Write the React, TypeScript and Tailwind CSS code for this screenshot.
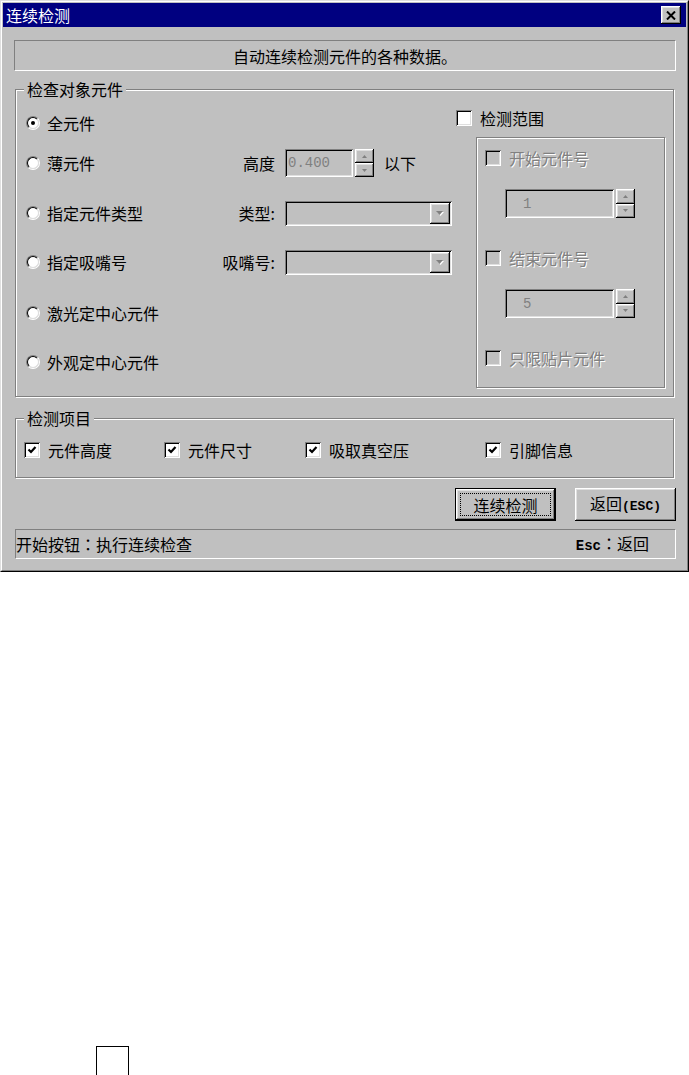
import React from "react";

// win98 style bevels
const raised =
  "[box-shadow:inset_-1px_-1px_0_#000,inset_1px_1px_0_#fff,inset_-2px_-2px_0_#808080,inset_2px_2px_0_#dfdfdf]";
const sunken =
  "[box-shadow:inset_1px_1px_0_#808080,inset_-1px_-1px_0_#fff,inset_2px_2px_0_#000,inset_-2px_-2px_0_#dfdfdf]";
const etched = "border border-[#808080] [box-shadow:1px_1px_0_#fff,inset_1px_1px_0_#fff]";
const mono = "[font-family:'Liberation_Mono',monospace]";
const tcColon = "[font-family:'Noto_Sans_CJK_TC',sans-serif]";
const grayText = "text-[#808080] [text-shadow:1px_1px_0_#fff]";

function Radio({ checked }: { checked?: boolean }) {
  return (
    <span className="flex h-[14px] w-[14px] shrink-0 rounded-full border border-t-[#808080] border-l-[#808080] border-r-white border-b-white">
      <span className="flex h-full w-full items-center justify-center rounded-full border border-t-black border-l-black border-r-[#dfdfdf] border-b-[#dfdfdf] bg-white">
        {checked && <span className="h-[4px] w-[4px] rounded-full bg-black" />}
      </span>
    </span>
  );
}

function Check({ checked, disabled }: { checked?: boolean; disabled?: boolean }) {
  return (
    <span
      className={`flex h-[16px] w-[16px] shrink-0 items-center justify-center ${sunken} ${
        disabled ? "bg-[#c0c0c0]" : "bg-white"
      }`}
    >
      {checked && (
        <svg width="10" height="10" viewBox="0 0 10 10">
          <path d="M1.5 4.5 L4 7 L8.5 2" stroke="#000" strokeWidth="2.2" fill="none" />
        </svg>
      )}
    </span>
  );
}

function SpinButtons({ h }: { h: string }) {
  return (
    <div className={`ml-[2px] flex flex-col ${h}`}>
      <div className={`flex w-[19px] flex-1 items-center justify-center bg-[#c0c0c0] ${raised}`}>
        <svg width="5" height="3" viewBox="0 0 5 3">
          <path d="M2.5 0 L5 3 L0 3Z" fill="#808080" />
        </svg>
      </div>
      <div className={`flex w-[19px] flex-1 items-center justify-center bg-[#c0c0c0] ${raised}`}>
        <svg width="5" height="3" viewBox="0 0 5 3">
          <path d="M0 0 L5 0 L2.5 3Z" fill="#808080" />
        </svg>
      </div>
    </div>
  );
}

function Combo() {
  return (
    <div className={`flex h-[25px] w-[167px] items-center justify-end bg-[#c0c0c0] pr-[2px] ${sunken}`}>
      <div className={`flex h-[21px] w-[20px] items-center justify-center bg-[#c0c0c0] ${raised}`}>
        <svg width="8" height="5" viewBox="0 0 8 5">
          <path d="M1 1 L8 1 L4.5 5Z" fill="#fff" />
          <path d="M0 0 L7 0 L3.5 4Z" fill="#808080" />
        </svg>
      </div>
    </div>
  );
}

function RadioCell({ label, checked, right }: { label: string; checked?: boolean; right?: string }) {
  return (
    <div className="flex w-[249px] items-center">
      <Radio checked={checked} />
      <span className="ml-[7px]">{label}</span>
      {right && <span className="ml-auto">{right}</span>}
    </div>
  );
}

function Legend({ text }: { text: string }) {
  return (
    <span className="absolute top-[-10px] left-[8px] bg-[#c0c0c0] px-[3px] leading-[18px]">{text}</span>
  );
}

function DisabledCheckRow({ label }: { label: string }) {
  return (
    <div className="flex h-[20px] items-center">
      <Check disabled />
      <span className={`ml-[8px] ${grayText}`}>{label}</span>
    </div>
  );
}

function NumberSpin({ value }: { value: string }) {
  return (
    <div className="ml-[20px] flex">
      <div
        className={`flex h-[29px] w-[109px] items-center bg-[#c0c0c0] pl-[18px] text-[14px] text-[#808080] ${mono} ${sunken}`}
      >
        {value}
      </div>
      <SpinButtons h="h-[29px]" />
    </div>
  );
}

export default function App() {
  return (
    <div className="min-h-screen bg-white text-[16px] leading-[18px] text-black [font-family:'Noto_Sans_CJK_SC','Noto_Sans',sans-serif]">
      <div className="h-[572px] w-[689px] border border-t-[#dfdfdf] border-l-[#dfdfdf] border-r-black border-b-black">
        <div className="flex h-full flex-col border border-t-white border-l-white border-r-[#808080] border-b-[#808080] bg-[#c0c0c0] p-[1px]">
          {/* title */}
          <div className="flex h-[24px] shrink-0 items-center justify-between bg-[#000080] pr-[5px] pl-[3px]">
            <span className="text-white">连续检测</span>
            <div className={`flex h-[18px] w-[20px] items-center justify-center bg-[#c0c0c0] ${raised}`}>
              <svg width="10" height="9" viewBox="0 0 10 9">
                <path d="M1 0.5 L9 8.5 M9 0.5 L1 8.5" stroke="#000" strokeWidth="2" />
              </svg>
            </div>
          </div>

          <div className="mt-[13px] ml-[11px] flex h-[31px] w-[662px] items-center justify-center border border-t-[#808080] border-l-[#808080] border-r-white border-b-white">
            自动连续检测元件的各种数据。
          </div>

          {/* 检查对象元件 */}
          <div className={`relative mt-[18px] ml-[12px] flex h-[308px] w-[659px] ${etched}`}>
            <Legend text="检查对象元件" />
            <div className="flex w-[440px] flex-col pt-[18px] pl-[10px]">
              <div className="flex h-[30px] items-center">
                <RadioCell label="全元件" checked />
              </div>
              <div className="mt-[10px] flex h-[30px] items-center">
                <RadioCell label="薄元件" right="高度" />
                <div
                  className={`ml-[10px] flex h-[28px] w-[68px] items-center bg-[#c0c0c0] pl-[3px] text-[14px] text-[#808080] ${mono} ${sunken}`}
                >
                  0.400
                </div>
                <SpinButtons h="h-[28px]" />
                <span className="ml-[10px]">以下</span>
              </div>
              <div className="mt-[20px] flex h-[30px] items-center">
                <RadioCell label="指定元件类型" right="类型:" />
                <div className="ml-[10px]">
                  <Combo />
                </div>
              </div>
              <div className="mt-[19px] flex h-[30px] items-center">
                <RadioCell label="指定吸嘴号" right="吸嘴号:" />
                <div className="ml-[10px]">
                  <Combo />
                </div>
              </div>
              <div className="mt-[21px] flex h-[30px] items-center">
                <RadioCell label="激光定中心元件" />
              </div>
              <div className="mt-[19px] flex h-[30px] items-center">
                <RadioCell label="外观定中心元件" />
              </div>
            </div>

            <div className="flex flex-col pt-[18px]">
              <div className="flex h-[20px] items-center">
                <Check />
                <span className="ml-[8px]">检测范围</span>
              </div>
              <div className={`mt-[9px] ml-[20px] flex h-[251px] w-[189px] flex-col pt-[10px] pl-[8px] ${etched}`}>
                <DisabledCheckRow label="开始元件号" />
                <div className="mt-[21px]">
                  <NumberSpin value="1" />
                </div>
                <div className="mt-[30px]">
                  <DisabledCheckRow label="结束元件号" />
                </div>
                <div className="mt-[21px]">
                  <NumberSpin value="5" />
                </div>
                <div className="mt-[30px]">
                  <DisabledCheckRow label="只限贴片元件" />
                </div>
              </div>
            </div>
          </div>

          {/* 检测项目 */}
          <div className={`relative mt-[21px] ml-[12px] flex h-[60px] w-[659px] items-start pt-[21px] pl-[8px] ${etched}`}>
            <Legend text="检测项目" />
            <div className="flex h-[20px] w-[140px] items-center">
              <Check checked />
              <span className="ml-[8px]">元件高度</span>
            </div>
            <div className="flex h-[20px] w-[141px] items-center">
              <Check checked />
              <span className="ml-[8px]">元件尺寸</span>
            </div>
            <div className="flex h-[20px] w-[180px] items-center">
              <Check checked />
              <span className="ml-[8px]">吸取真空压</span>
            </div>
            <div className="flex h-[20px] items-center">
              <Check checked />
              <span className="ml-[8px]">引脚信息</span>
            </div>
          </div>

          {/* buttons */}
          <div className="mt-[10px] flex justify-end gap-[19px] pr-[10px]">
            <div className="flex h-[33px] w-[101px] border border-black bg-[#c0c0c0]">
              <div className={`flex h-full w-full p-[4px] ${raised}`}>
                <div className="flex h-full w-full items-center justify-center border border-dotted border-black">
                  连续检测
                </div>
              </div>
            </div>
            <div className={`flex h-[33px] w-[101px] items-center justify-center bg-[#c0c0c0] ${raised}`}>
              <span>
                返回<span className={`text-[13px] font-bold ${mono}`}>(ESC)</span>
              </span>
            </div>
          </div>

          {/* status */}
          <div className="mt-[8px] ml-[12px] flex h-[30px] w-[661px] items-center justify-between border border-t-[#808080] border-l-[#808080] border-r-white border-b-white pr-[26px]">
            <span>
              开始按钮<span className={tcColon}>：</span>执行连续检查
            </span>
            <span>
              <span className={`text-[14px] font-bold ${mono}`}>Esc</span>
              <span className={tcColon}>：</span>返回
            </span>
          </div>
        </div>
      </div>

      <div className="mt-[474px] ml-[96px] h-[29px] w-[33px] border border-b-0 border-black" />
    </div>
  );
}
